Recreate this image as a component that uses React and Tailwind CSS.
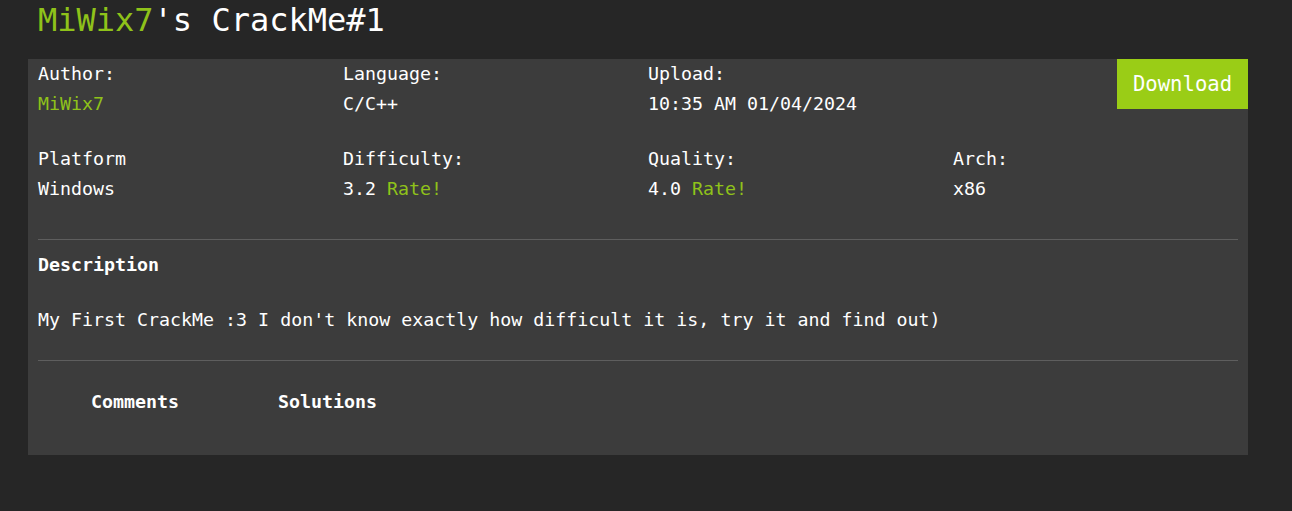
import React from 'react';

const mono = "font-['DejaVu_Sans_Mono','Liberation_Mono',monospace]";

function Field({ label, children }) {
  return (
    <div className="pl-[10px]">
      <div className="leading-[30px]">{label}</div>
      <div className="leading-[29px]">{children}</div>
    </div>
  );
}

function App() {
  return (
    <div className={`min-h-[511px] bg-[#262626] text-white ${mono}`}>
      {/* title */}
      <h1 className="pl-[38px] text-[32px] leading-[40px] mb-[19px]">
        <span className="text-[#8fc21a]">MiWix7</span>'s CrackMe#1
      </h1>

      <div className="ml-[28px] w-[1220px] bg-[#3c3c3c] text-[18.3px]">
        {/* info grid */}
        <div className="grid grid-cols-4">
          <Field label="Author:">
            <span className="text-[#8fc21a]">MiWix7</span>
          </Field>
          <Field label="Language:">C/C++</Field>
          <Field label="Upload:">10:35 AM 01/04/2024</Field>
          <div className="flex justify-end items-start">
            <button className="h-[50px] w-[131px] bg-[#9acd16] text-white text-[20.6px]">
              Download
            </button>
          </div>
        </div>

        <div className="grid grid-cols-4 mt-[26px]">
          <Field label="Platform">Windows</Field>
          <Field label="Difficulty:">
            3.2 <span className="text-[#8fc21a]">Rate!</span>
          </Field>
          <Field label="Quality:">
            4.0 <span className="text-[#8fc21a]">Rate!</span>
          </Field>
          <Field label="Arch:">x86</Field>
        </div>

        <div className="mx-[10px] mt-[36px] border-t border-[#5e5e5e]" />

        <div className="px-[10px] mt-[10px]">
          <div className="font-bold leading-[30px]">Description</div>
          <p className="mt-[25px] leading-[30px]">
            My First CrackMe :3 I don't know exactly how difficult it is, try it and find out)
          </p>
        </div>

        <div className="mx-[10px] mt-[25px] border-t border-[#5e5e5e]" />

        {/* tabs */}
        <div className="flex gap-[99px] pl-[63px] pt-[26px] pb-[38px] font-bold leading-[30px]">
          <span>Comments</span>
          <span>Solutions</span>
        </div>
      </div>
    </div>
  );
}

export default App;
